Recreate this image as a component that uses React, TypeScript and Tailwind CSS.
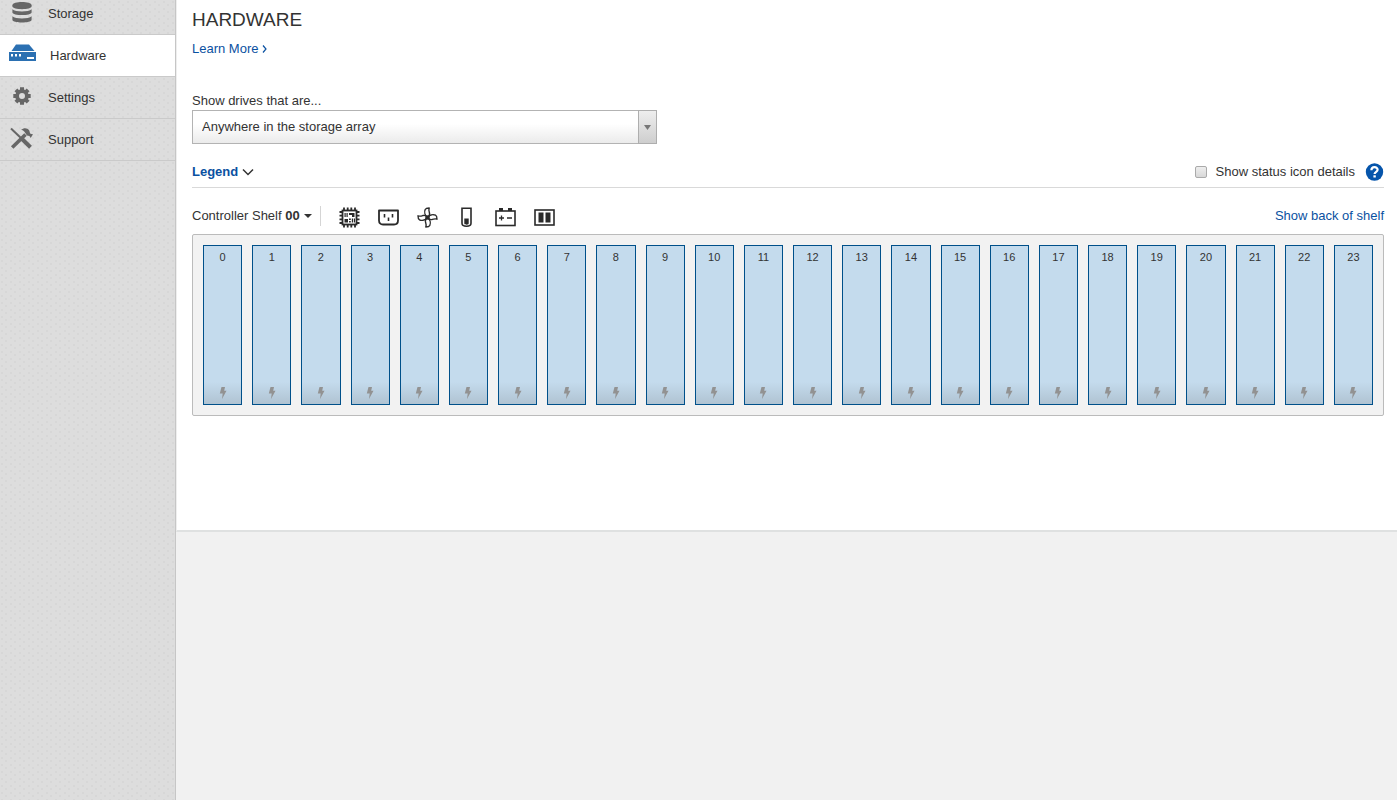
import type { ReactNode } from "react";

const drives = Array.from({ length: 24 }, (_, i) => i);

function StorageIcon() {
  return (
    <svg width="22" height="22" viewBox="0 2 22 22" fill="#666">
      <path d="M1.4 5.200C1.400 1 20.600 1 20.600 5.200v1.400C20.600 10 1.400 10 1.400 6.600z" />
      <path d="M1.400 9.300c3 2.900 16.200 2.900 19.200 0v3.200c0 3.400-19.200 3.400-19.200 0z" />
      <path d="M1.400 16.200c3 2.900 16.200 2.900 19.200 0v3.600c0 3.700-19.200 3.700-19.200 0z" />
    </svg>
  );
}

function HardwareIcon() {
  return (
    <svg width="30" height="18" viewBox="0 0 30 18" fill="#2b70b2">
      <path d="M8 .5h13L26.500 7h-23z" />
      <rect x="1" y="8" width="27" height="9" />
      <path fill="#fff" d="M3 10h2v2.500H3zM7 10h2v2.500H7zM11 10h2v2.500h-2zM19 13h7v2h-7z" />
    </svg>
  );
}

function SettingsIcon() {
  return (
    <svg width="18" height="19" viewBox="0 -1 18 19">
      <path
        d="M9 .3v17.400M.300 9h17.400M2.900 2.900l12.200 12.200M15.100 2.900L2.900 15.100"
        stroke="#666"
        strokeWidth="4"
      />
      <circle cx="9" cy="9" r="4.900" fill="#dcdcdc" stroke="#666" strokeWidth="3.800" />
    </svg>
  );
}

function SupportIcon() {
  return (
    <svg width="24" height="22" viewBox="0 1 24 22" fill="none" stroke="#666">
      <path d="M2.200 20.500L15.500 7.500" strokeWidth="3.600" />
      <path d="M1 1.500L12 12" strokeWidth="2" />
      <path d="M11.500 11.500L20.500 20.300" strokeWidth="4" />
      <path
        d="M11 2.800C14 .3 17.500.8 19.300 3.500l.8 3 1.400.500 1.500.300-2.300 3.700-1.300-2-2.400-.600-2.600-3.600c-.700-1.200-1.900-1.700-3.400-2z"
        fill="#666"
        stroke="none"
      />
    </svg>
  );
}

const navItems: { label: string; icon: ReactNode }[] = [
  { label: "Storage", icon: <StorageIcon /> },
  { label: "Hardware", icon: <HardwareIcon /> },
  { label: "Settings", icon: <SettingsIcon /> },
  { label: "Support", icon: <SupportIcon /> },
];

function ControllerIcon() {
  return (
    <svg width="21" height="21" viewBox="0 0 21 21" fill="#2a2a2a">
      <path
        d="M5 .5v3M8.700 .5v3M12.300 .5v3M16 .5v3M5 17.500v3M8.700 17.500v3M12.300 17.500v3M16 17.500v3M.5 5h3M.5 8.700h3M.5 12.300h3M.5 16h3M17.500 5h3M17.500 8.700h3M17.500 12.300h3M17.500 16h3"
        stroke="#2a2a2a"
        strokeWidth="1.800"
      />
      <rect x="3.500" y="3.500" width="14" height="14" fill="#fff" stroke="#2a2a2a" strokeWidth="1.800" />
      <path d="M5.500 6h1.200v4H5.500zM7.500 6h1.200v4H7.500zM10 6h5.500v4H13V8h-3zM5.500 12h3.500v3.500H5.500zM10 11.500h1.800v1.500H10zM12.800 11.500H14v4h-1.200zM14.800 11.500H16v4h-1.200zM10 14h1.800v1.500H10z" />
    </svg>
  );
}

function PowerIcon() {
  return (
    <svg width="21" height="21" viewBox="0 0 21 21" fill="none" stroke="#2a2a2a" strokeWidth="1.800">
      <path d="M1 3.500h19v10c0 2.500-1.500 4-4 4H5c-2.500 0-4-1.500-4-4z" strokeLinejoin="round" />
      <path d="M6.500 7v3.500M14.500 7v3.500M10.500 10.500v3.500" strokeWidth="1.600" />
    </svg>
  );
}

function FanIcon() {
  const blade = "M10.500 10.500C8 8.500 7 5 8.200 2.500c.6-1.200 2-1.500 4-1.500-.8 2-.2 3.500.3 5 .4 1.500-.5 3.500-2 4.500z";
  return (
    <svg width="21" height="21" viewBox="0 0 21 21" fill="none" stroke="#2a2a2a" strokeWidth="1.400" strokeLinejoin="round">
      <path d={blade} />
      <path d={blade} transform="rotate(90 10.500 10.500)" />
      <path d={blade} transform="rotate(180 10.500 10.500)" />
      <path d={blade} transform="rotate(270 10.500 10.500)" />
      <circle cx="10.500" cy="10.500" r="2.200" fill="#2a2a2a" stroke="none" />
    </svg>
  );
}

function ThermalIcon() {
  return (
    <svg width="21" height="21" viewBox="0 0 21 21">
      <path d="M6 1.300h9v15c0 4-9 4-9 0z" fill="none" stroke="#2a2a2a" strokeWidth="1.600" />
      <path d="M8.300 11.500h4.400v5c0 1.600-4.400 1.600-4.400 0z" fill="#2a2a2a" />
    </svg>
  );
}

function BatteryIcon() {
  return (
    <svg width="21" height="21" viewBox="0 0 21 21">
      <path d="M4 1h4v3H4zM13 1h4v3h-4z" fill="#2a2a2a" />
      <rect x="1" y="4" width="19" height="14.500" fill="none" stroke="#2a2a2a" strokeWidth="1.600" />
      <path d="M4 11h5M6.500 8.500v5M12 11h5" stroke="#2a2a2a" strokeWidth="1.300" />
    </svg>
  );
}

function SfpIcon() {
  return (
    <svg width="21" height="21" viewBox="0 0 21 21">
      <rect x="1" y="3" width="19" height="15" fill="none" stroke="#2a2a2a" strokeWidth="1.600" />
      <path d="M4.500 5.500h5v10h-5zM11.500 5.500h5v10h-5z" fill="#2a2a2a" />
    </svg>
  );
}

const components: { label: string; icon: ReactNode }[] = [
  { label: "Controllers", icon: <ControllerIcon /> },
  { label: "Power supplies", icon: <PowerIcon /> },
  { label: "Fans", icon: <FanIcon /> },
  { label: "Temperature", icon: <ThermalIcon /> },
  { label: "Batteries", icon: <BatteryIcon /> },
  { label: "SFPs", icon: <SfpIcon /> },
];

function Sidebar() {
  return (
    <nav className="w-44 shrink-0 border-r border-[#c6c6c6] bg-[#dddddd] bg-[radial-gradient(circle_at_2px_2px,#d7d7d7_1px,transparent_1px),radial-gradient(circle_at_6px_5px,#d7d7d7_1px,transparent_1px)] bg-[size:9px_7px]">
      <ul className="-mt-[7px]">
        {navItems.map(({ label, icon }) => {
          const active = label === "Hardware";
          return (
            <li key={label}>
              <a
                href="#"
                aria-current={active ? "page" : undefined}
                className={
                  active
                    ? "flex h-[42px] items-center gap-3 border-b border-[#cacaca] bg-white pl-2"
                    : "flex h-[42px] items-center gap-3 border-b border-[#cacaca] pl-2"
                }
              >
                <span className="flex h-6 min-w-7 items-start justify-center">{icon}</span>
                <span>{label}</span>
              </a>
            </li>
          );
        })}
      </ul>
    </nav>
  );
}

function Drive({ slot }: { slot: number }) {
  return (
    <button
      type="button"
      className="flex h-40 min-w-0 flex-col items-center justify-between border border-[#00508a] bg-[linear-gradient(to_bottom,#c4dbed_0,#c4dbed_86%,#b0c3d2_100%)] pt-1 pb-1 text-[11px] leading-[14px] text-[#333]"
    >
      <span>{slot}</span>
      <svg width="8" height="14" viewBox="0 0 8 14" fill="#929292">
        <path d="M2.500 1H6L5.200 4.800h2.300L3 13l.700-5.500H.800z" />
      </svg>
    </button>
  );
}

export default function App() {
  return (
    <div className="flex min-h-screen overflow-hidden bg-[#f1f1f1] font-['Liberation_Sans',Arial,sans-serif] text-[13px] leading-4 text-[#333]">
      <Sidebar />
      <div className="min-w-0 flex-1">
        <main className="border-b-2 border-l border-b-[#dfe1e1] border-l-[#eee] bg-white pt-[9px] pr-[13px] pb-[114px] pl-[15px]">
          <h1 className="text-[19px] leading-[22px]">HARDWARE</h1>
          <a href="#" className="mt-2.5 flex w-fit items-center gap-1 text-[#0a51a1]">
            Learn More
            <svg width="5" height="8" viewBox="0 0 5 8" fill="none" stroke="currentColor" strokeWidth="1.200">
              <path d="M1 .5L4 4 1 7.500" />
            </svg>
          </a>

          <label htmlFor="drive-filter" className="mt-9 block">
            Show drives that are...
          </label>
          <div className="mt-px flex h-[34px] max-w-[465px]">
            <div className="relative flex-1">
              <select
                id="drive-filter"
                className="h-full w-full appearance-none border border-[#b3b3b3] bg-[linear-gradient(to_bottom,#fff_40%,#ebebeb)] pl-[9px] text-[#333]"
              >
                <option>Anywhere in the storage array</option>
              </select>
              <span className="pointer-events-none absolute inset-y-0 right-0 flex w-[19px] items-center justify-center border border-[#aeaeae] bg-[linear-gradient(to_bottom,#eee,#cecece)]">
                <svg width="7" height="5" viewBox="0 0 7 5" fill="#777">
                  <path d="M0 0h7L3.500 5z" />
                </svg>
              </span>
            </div>
          </div>

          <div className="mt-[17px] flex items-center justify-between border-b border-[#d9d9d9] pb-1">
            <button type="button" className="flex items-center gap-1 font-bold text-[#0a51a1]">
              Legend
              <svg width="12" height="8" viewBox="0 0 12 8" fill="none" stroke="#333" strokeWidth="1.500">
                <path d="M1 1.500l5 5 5-5" />
              </svg>
            </button>
            <div className="flex items-center">
              <input
                id="status-details"
                type="checkbox"
                className="size-3 appearance-none rounded-xs border border-[#aaa] bg-[linear-gradient(to_bottom,#eee,#d8d8d8)]"
              />
              <label htmlFor="status-details" className="ml-[9px]">
                Show status icon details
              </label>
              <button type="button" aria-label="Help" className="ml-2.5">
                <svg width="19" height="22" viewBox="0 0 19 22">
                  <circle cx="9.500" cy="11" r="8.700" fill="#0655ab" />
                  <path
                    d="M6.400 9.300C6.300 5.200 12.700 5.200 12.600 8.800c0 2-3 2-3 4.200"
                    fill="none"
                    stroke="#fff"
                    strokeWidth="2.200"
                  />
                  <rect x="8.400" y="14.300" width="2.400" height="2.200" fill="#fff" />
                </svg>
              </button>
            </div>
          </div>

          <div className="mt-[18px] flex items-center justify-between">
            <div className="flex items-center">
              <button type="button" className="flex items-center gap-1">
                <span>
                  Controller Shelf <b>00</b>
                </span>
                <svg width="8" height="4" viewBox="0 0 8 4" fill="#333">
                  <path d="M0 0h8L4 4z" />
                </svg>
              </button>
              <ul className="ml-2 flex h-5 items-start gap-[18px] border-l border-[#d5d5d5] pt-px pl-[18px]">
                {components.map(({ label, icon }) => (
                  <li key={label}>
                    <button type="button" aria-label={label} className="block">
                      {icon}
                    </button>
                  </li>
                ))}
              </ul>
            </div>
            <a href="#" className="text-[#0a51a1]">
              Show back of shelf
            </a>
          </div>

          <section
            aria-label="Controller Shelf 00"
            className="mt-2 grid grid-cols-[repeat(24,minmax(0,1fr))] gap-2.5 rounded-xs border border-[#bbb] bg-[#f2f2f2] p-2.5"
          >
            {drives.map((slot) => (
              <Drive key={slot} slot={slot} />
            ))}
          </section>
        </main>
      </div>
    </div>
  );
}
